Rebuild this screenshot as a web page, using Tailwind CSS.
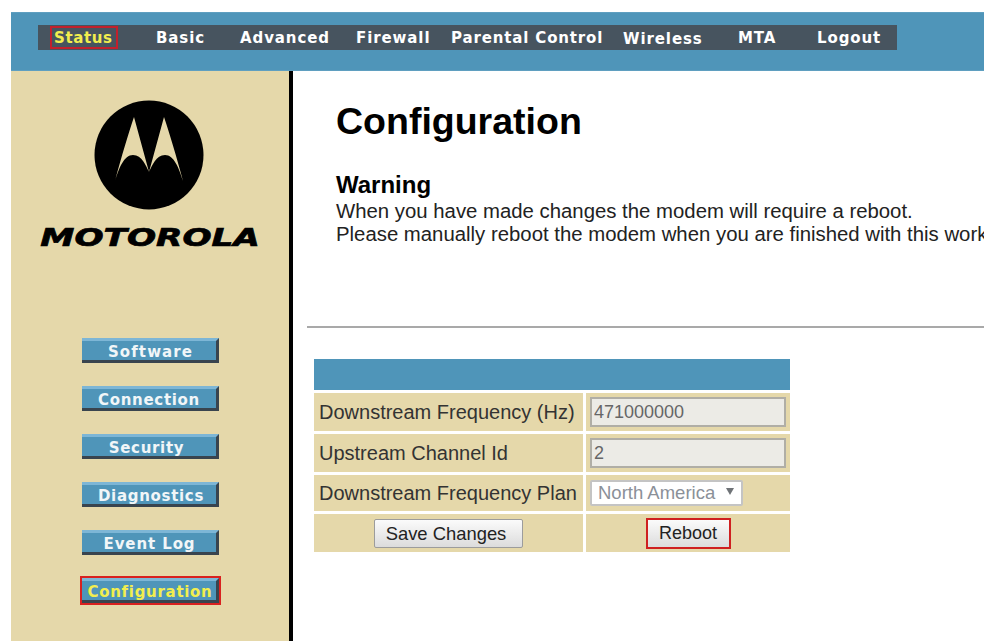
<!DOCTYPE html>
<html lang="en">
<head>
  <meta charset="UTF-8" />
  <title>Motorola Cable Modem - Configuration</title>
  <script src="https://cdn.jsdelivr.net/npm/@tailwindcss/browser@4"></script>
</head>
<body class="bg-white w-[984px] h-[641px] overflow-hidden font-['Liberation_Sans',Arial,sans-serif]">
  <div class="pl-[11px] pt-[12px] w-[984px] h-[641px] overflow-hidden">
    <!-- top nav -->
    <header class="h-[59px] bg-[#4f95b9] border-y border-[#5f9fc0] pt-[12px] pl-[27px]">
      <nav class="w-[859px] h-[25px] bg-[#47545f] flex items-center text-white font-bold text-[15px] tracking-[0.9px] whitespace-nowrap font-['DejaVu_Sans',sans-serif]">
        <div class="w-[118px] pl-[12px]">
          <a href="#" class="block w-[68px] h-[23px] leading-[21px] pl-[2px] tracking-[0.6px] border-2 border-[#c3202c] text-[#f2ee4e]">Status</a>
        </div>
        <a href="#" class="w-[84px] pt-[2px]">Basic</a>
        <a href="#" class="w-[116px] pt-[2px]">Advanced</a>
        <a href="#" class="w-[95px] pt-[2px]">Firewall</a>
        <a href="#" class="w-[172px] pt-[2px] tracking-[0.85px]">Parental Control</a>
        <a href="#" class="w-[115px] pt-[4px]">Wireless</a>
        <a href="#" class="w-[79px] pt-[2px]">MTA</a>
        <a href="#" class="w-[80px] pt-[2px]">Logout</a>
      </nav>
    </header>

    <div class="flex h-[571px]">
      <!-- sidebar -->
      <aside class="w-[282px] shrink-0 bg-[#e5d8aa] border-r-[4px] border-black flex flex-col items-center">
        <svg class="mt-[29px] mr-[2px] w-[110px] h-[110px] shrink-0" viewBox="0 0 110 110">
          <circle cx="55" cy="55" r="54.5" fill="#000" />
          <path fill="#e5d8aa" d="M21 81 C27 58 35 32 40 17 L55 72 L70 17 C75 32 83 58 89 81 C85 68 80 55 71 55 C62 55 58 66 55 72 C52 66 48 55 39 55 C30 55 25 68 21 81 Z" />
        </svg>
        <div class="mt-[12px] h-[32px] leading-[32px] text-black font-bold italic text-[25px] whitespace-nowrap scale-x-[1.37] [-webkit-text-stroke:0.7px_black] font-['DejaVu_Sans',sans-serif]">MOTOROLA</div>

        <div class="mt-[84px] ml-[1px] flex flex-col gap-[23px] font-bold text-[15px] tracking-[0.7px] text-[#f1f6f8] font-['DejaVu_Sans',sans-serif]">
          <a href="#" class="block w-[137px] h-[25px] leading-[22px] pl-[3px] tracking-[1.1px] text-center bg-[#4f95b9] border-t-[3px] border-t-[#7db6d6] border-r-[3px] border-r-[#39444e] border-b-[3px] border-b-[#39444e]">Software</a>
          <a href="#" class="block w-[137px] h-[25px] leading-[22px] text-center bg-[#4f95b9] border-t-[3px] border-t-[#7db6d6] border-r-[3px] border-r-[#39444e] border-b-[3px] border-b-[#39444e]">Connection</a>
          <a href="#" class="block w-[137px] h-[25px] leading-[22px] pr-[5px] text-center bg-[#4f95b9] border-t-[3px] border-t-[#7db6d6] border-r-[3px] border-r-[#39444e] border-b-[3px] border-b-[#39444e]">Security</a>
          <a href="#" class="block w-[137px] h-[25px] leading-[22px] pl-[4px] text-center bg-[#4f95b9] border-t-[3px] border-t-[#7db6d6] border-r-[3px] border-r-[#39444e] border-b-[3px] border-b-[#39444e]">Diagnostics</a>
          <a href="#" class="block w-[137px] h-[25px] leading-[22px] pl-[1px] tracking-[0.9px] text-center bg-[#4f95b9] border-t-[3px] border-t-[#7db6d6] border-r-[3px] border-r-[#39444e] border-b-[3px] border-b-[#39444e]">Event Log</a>
          <a href="#" class="block w-[137px] h-[25px] leading-[22px] pl-[2px] text-center text-[#f2ee4e] bg-[#4f95b9] border-t-[3px] border-t-[#7db6d6] border-r-[3px] border-r-[#39444e] border-b-[3px] border-b-[#39444e] outline-2 outline-[#d9211f]">Configuration</a>
        </div>
      </aside>

      <!-- main content -->
      <main class="flex-1 pl-[14px] min-w-0">
        <div class="pl-[29px]">
          <h1 class="pt-[27px] text-[37.5px] leading-[46px] font-bold text-black">Configuration</h1>
          <h2 class="mt-[27px] text-[24px] leading-[28px] font-bold text-black">Warning</h2>
          <p class="mt-[1px] text-[20.35px] leading-[23px] text-[#222] whitespace-nowrap">When you have made changes the modem will require a reboot.<br />Please manually reboot the modem when you are finished with this work</p>
        </div>
        <hr class="mt-[80px] border-0 h-[2px] bg-[#a9a9a9]" />

        <div class="ml-[7px] mt-[31px] w-[476px] grid grid-cols-[269px_204px] grid-rows-[31px_38px_38px_36px_38px] gap-[3px] text-[20px] text-[#333]">
          <div class="col-span-2 bg-[#4f95b9]"></div>

          <div class="bg-[#e5d8aa] pl-[5px] flex items-center">Downstream Frequency (Hz)</div>
          <div class="bg-[#e5d8aa] pl-[4px] flex items-center">
            <input disabled value="471000000" class="w-[196px] h-[30px] px-[2px] bg-[#ecebe6] border-2 border-[#b0aea6] text-[18px] text-[#666]" />
          </div>

          <div class="bg-[#e5d8aa] pl-[5px] flex items-center">Upstream Channel Id</div>
          <div class="bg-[#e5d8aa] pl-[4px] flex items-center">
            <input disabled value="2" class="w-[196px] h-[30px] px-[2px] bg-[#ecebe6] border-2 border-[#b0aea6] text-[18px] text-[#666]" />
          </div>

          <div class="bg-[#e5d8aa] pl-[5px] flex items-center">Downstream Frequency Plan</div>
          <div class="bg-[#e5d8aa] pl-[4px] flex items-center">
            <div class="relative w-[153px] h-[26px]">
              <select disabled class="block appearance-none w-full h-full pl-[6px] bg-white border-2 border-[#c4c4c4] rounded-[2px] text-[18.5px] leading-[20px] text-[#8b9098]">
                <option>North America</option>
              </select>
              <svg class="absolute left-[136px] top-[8px] w-[8px] h-[7px]" viewBox="0 0 8 7"><path d="M0 0 H8 L4 7 Z" fill="#6f7377" /></svg>
            </div>
          </div>

          <div class="bg-[#e5d8aa] flex items-center justify-center">
            <button class="w-[149px] h-[29px] pb-[2px] pr-[5px] rounded-[2px] border border-[#9c9c9c] bg-gradient-to-b from-[#fbfbfb] to-[#dcdcdc] text-[18.4px] text-[#222]">Save Changes</button>
          </div>
          <div class="bg-[#e5d8aa] flex items-center justify-center">
            <button class="w-[85px] h-[31px] pb-[1px] border-2 border-[#cf2020] bg-gradient-to-b from-[#fbfbfb] to-[#dcdcdc] text-[18px] text-[#222]">Reboot</button>
          </div>
        </div>
      </main>
    </div>
  </div>
</body>
</html>
